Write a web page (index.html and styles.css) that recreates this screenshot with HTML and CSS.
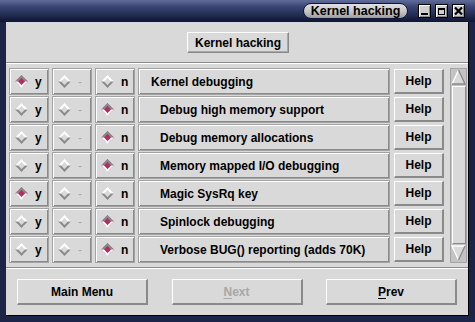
FILE: index.html
```html
<!DOCTYPE html>
<html lang="en">
  <head>
    <meta charset="UTF-8" />
    <title>Kernel hacking</title>
    <link rel="stylesheet" href="styles.css">
  </head>
  <body>
    <div class="window">
      <div class="titlebar">
        <div class="title">Kernel hacking</div>
        <div class="wm-buttons">
          <span class="wm-btn">
            <svg width="11" height="12" viewBox="0 0 11 12"><rect x="2" y="8" width="7" height="2" fill="#000"/></svg>
          </span>
          <span class="wm-btn">
            <svg width="11" height="12" viewBox="0 0 11 12"><rect x="2.5" y="3.5" width="6" height="6" fill="none" stroke="#000"/><rect x="2" y="3" width="7" height="2" fill="#000"/></svg>
          </span>
          <span class="wm-btn">
            <svg width="11" height="12" viewBox="0 0 11 12"><path d="M2 2.5 L9 9.5 M9 2.5 L2 9.5" stroke="#000" stroke-width="2.2"/></svg>
          </span>
        </div>
      </div>

      <div class="client">
        <div class="top-panel">
          <button class="btn head-btn">Kernel hacking</button>
        </div>
        <div class="sep"></div>

        <div class="list">
          <div class="rows">
            <div class="row">
              <div class="cell opt"><span class="dia-box"><span class="dia on"></span></span><span>y</span></div>
              <div class="cell opt"><span class="dia-box"><span class="dia"></span></span><span class="dim">-</span></div>
              <div class="cell opt"><span class="dia-box"><span class="dia"></span></span><span>n</span></div>
              <div class="cell label">Kernel debugging</div>
              <button class="btn help">Help</button>
            </div>
            <div class="row">
              <div class="cell opt"><span class="dia-box"><span class="dia"></span></span><span>y</span></div>
              <div class="cell opt"><span class="dia-box"><span class="dia"></span></span><span class="dim">-</span></div>
              <div class="cell opt"><span class="dia-box"><span class="dia on"></span></span><span>n</span></div>
              <div class="cell label sub">Debug high memory support</div>
              <button class="btn help">Help</button>
            </div>
            <div class="row">
              <div class="cell opt"><span class="dia-box"><span class="dia"></span></span><span>y</span></div>
              <div class="cell opt"><span class="dia-box"><span class="dia"></span></span><span class="dim">-</span></div>
              <div class="cell opt"><span class="dia-box"><span class="dia on"></span></span><span>n</span></div>
              <div class="cell label sub">Debug memory allocations</div>
              <button class="btn help">Help</button>
            </div>
            <div class="row">
              <div class="cell opt"><span class="dia-box"><span class="dia"></span></span><span>y</span></div>
              <div class="cell opt"><span class="dia-box"><span class="dia"></span></span><span class="dim">-</span></div>
              <div class="cell opt"><span class="dia-box"><span class="dia on"></span></span><span>n</span></div>
              <div class="cell label sub">Memory mapped I/O debugging</div>
              <button class="btn help">Help</button>
            </div>
            <div class="row">
              <div class="cell opt"><span class="dia-box"><span class="dia on"></span></span><span>y</span></div>
              <div class="cell opt"><span class="dia-box"><span class="dia"></span></span><span class="dim">-</span></div>
              <div class="cell opt"><span class="dia-box"><span class="dia"></span></span><span>n</span></div>
              <div class="cell label sub">Magic SysRq key</div>
              <button class="btn help">Help</button>
            </div>
            <div class="row">
              <div class="cell opt"><span class="dia-box"><span class="dia"></span></span><span>y</span></div>
              <div class="cell opt"><span class="dia-box"><span class="dia"></span></span><span class="dim">-</span></div>
              <div class="cell opt"><span class="dia-box"><span class="dia on"></span></span><span>n</span></div>
              <div class="cell label sub">Spinlock debugging</div>
              <button class="btn help">Help</button>
            </div>
            <div class="row">
              <div class="cell opt"><span class="dia-box"><span class="dia"></span></span><span>y</span></div>
              <div class="cell opt"><span class="dia-box"><span class="dia"></span></span><span class="dim">-</span></div>
              <div class="cell opt"><span class="dia-box"><span class="dia on"></span></span><span>n</span></div>
              <div class="cell label sub">Verbose BUG() reporting (adds 70K)</div>
              <button class="btn help">Help</button>
            </div>
          </div>

          <div class="scrollbar">
            <svg class="arrow" width="15" height="16" viewBox="0 0 15 16">
              <polygon points="7.5,1 14,15 1,15" fill="#d9d9d9"/>
              <path d="M1 15 L7.5 1" stroke="#fff" stroke-width="1.3" fill="none"/>
              <path d="M7.5 1 L14 15 L1 15" stroke="#8a8a8a" stroke-width="1.3" fill="none"/>
            </svg>
            <div class="slider"></div>
            <svg class="arrow" width="15" height="16" viewBox="0 0 15 16">
              <polygon points="1,1 14,1 7.5,15" fill="#d9d9d9"/>
              <path d="M7.5 15 L1 1 L14 1" stroke="#fff" stroke-width="1.3" fill="none"/>
              <path d="M14 1 L7.5 15" stroke="#8a8a8a" stroke-width="1.3" fill="none"/>
            </svg>
          </div>
        </div>

        <div class="sep"></div>
        <div class="bottom">
          <button class="btn big">Main Menu</button>
          <button class="btn big disabled"><u>N</u>ext</button>
          <button class="btn big"><u>P</u>rev</button>
        </div>
      </div>
    </div>
  </body>
</html>
```

FILE: styles.css
```css
* {
  box-sizing: border-box;
  --face: #d9d9d9;
  --trough: #c3c3c3;
  --shadow: #8a8a8a;
  --ring: #a3a3a3;
  --navy: #1c2548;
  --select: #b03060;
}

body {
  margin: 0;
  font-family: "Liberation Sans", Arial, sans-serif;
  font-size: 12px;
  font-weight: bold;
  color: #000;
}

.window {
  width: 475px;
  height: 322px;
  background: var(--navy);
  display: flex;
  flex-direction: column;
}

.titlebar {
  height: 22px;
  background: linear-gradient(#606c98, #3b4676 30%, #0e1533);
  display: flex;
  align-items: center;
  justify-content: flex-end;
  padding-right: 10px;
  gap: 10px;
}

.title {
  width: 105px;
  height: 16px;
  margin-top: -1px;
  border: 1px solid #10163a;
  border-radius: 8px;
  background: linear-gradient(#e0e0e0, #c4c4c4 55%, #9c9c9c);
  text-align: center;
  line-height: 14px;
  font-size: 12.5px;
}

.wm-buttons {
  display: flex;
  gap: 4px;
}

.wm-btn {
  width: 13px;
  height: 14px;
  border: 1px solid #000;
  background: #cfcfcf;
  box-shadow: inset 1px 1px #fff, inset -1px -1px #8a8a8a;
  display: flex;
}

.client {
  flex: 1;
  margin: 0 6px 6px 6px;
  background: var(--face);
  border-right: 1px solid #000;
  border-bottom: 1px solid #000;
  display: flex;
  flex-direction: column;
}

.btn {
  font: inherit;
  color: #000;
  background: var(--face);
  border: 1px solid;
  border-color: #fff var(--shadow) var(--shadow) #fff;
  box-shadow: inset -1px -1px #a8a8a8;
  padding: 0;
  margin: 0;
}

.top-panel {
  height: 40px;
  display: flex;
  align-items: center;
  justify-content: center;
}

.head-btn {
  width: 102px;
  height: 21px;
  margin-left: 2px;
  margin-top: 1px;
}

.sep {
  border-top: 1px solid var(--shadow);
  border-bottom: 1px solid #fff;
}

.list {
  display: flex;
  gap: 6px;
  padding: 4px 1px 4px 3px;
}

.rows {
  display: flex;
  flex-direction: column;
  gap: 1px;
}

.row {
  display: flex;
  gap: 3px;
  height: 27px;
  align-items: center;
}

.cell {
  height: 27px;
  border: 1px solid var(--ring);
  box-shadow: inset 1px 1px #fff, inset -1px -1px var(--shadow);
  display: flex;
  align-items: center;
}

.opt {
  width: 40px;
  padding-left: 5px;
  gap: 7px;
}

.dia-box {
  width: 13px;
  height: 13px;
  display: flex;
  align-items: center;
  justify-content: center;
}

.dia {
  width: 9px;
  height: 9px;
  border: 2px solid;
  border-color: #fff var(--shadow) var(--shadow) #fff;
  transform: rotate(45deg);
}

.dia.on {
  border-color: var(--shadow) #fff #fff var(--shadow);
  background: var(--select);
}

.dim {
  color: #a8a8a8;
  font-weight: normal;
}

.label {
  width: 252px;
  padding-left: 12px;
}

.label.sub {
  padding-left: 21px;
}

.help {
  width: 50px;
  height: 25px;
  margin-left: 1px;
  border-width: 1px 2px 2px 1px;
  box-shadow: none;
}

.scrollbar {
  width: 17px;
  height: 195px;
  background: var(--trough);
  border: 1px solid var(--ring);
  display: flex;
  flex-direction: column;
  align-items: center;
  padding: 0 0 1px;
}

.arrow {
  flex: none;
}

.slider {
  flex: 1;
  width: 14px;
  margin: 1px 0;
  background: var(--face);
  border: 1px solid;
  border-color: #fff var(--shadow) var(--shadow) #fff;
}

.bottom {
  flex: 1;
  display: flex;
  justify-content: space-between;
  align-items: flex-start;
  padding: 10px 11px 0;
}

.big {
  width: 131px;
  height: 26px;
  border-width: 1px 2px 2px 1px;
  box-shadow: none;
}

.big u {
  text-decoration-thickness: 1px;
  text-underline-offset: 2px;
}

.disabled {
  color: #a8a8a8;
}
```
